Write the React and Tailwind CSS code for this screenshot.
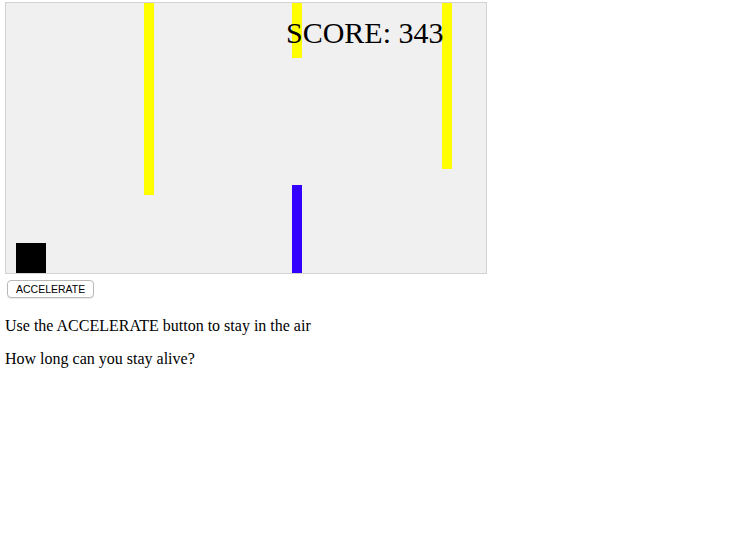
import React from 'react';

const obstacles = [
  { x: 138, y: 0, h: 192, color: 'bg-[#ffff00]' },
  { x: 286, y: 0, h: 55, color: 'bg-[#ffff00]' },
  { x: 286, y: 182, h: 88, color: 'bg-[#3300ff]' },
  { x: 436, y: 0, h: 166, color: 'bg-[#ffff00]' },
];

const App = () => {
  return (
    <div className="min-h-screen bg-white pl-[5px] pt-[2px] text-black" style={{ fontFamily: '"Liberation Serif", serif' }}>
      {/* Game canvas */}
      <div className="relative w-[482px] h-[272px] border border-[#d3d3d3] bg-[#f0f0f0] overflow-hidden">
        {obstacles.map((o, i) => (
          <div
            key={i}
            className={`absolute w-[10px] ${o.color}`}
            style={{ left: o.x, top: o.y, height: o.h }}
          />
        ))}
        <div className="absolute left-[10px] top-[240px] w-[30px] h-[30px] bg-black" />
        <span className="absolute left-[280px] top-[15px] text-[30px] leading-[30px] whitespace-nowrap">
          SCORE: 343
        </span>
      </div>

      <button
        className="mt-[6px] ml-[2px] h-[18px] px-[8px] rounded-[4px] border border-[#b8b8b8] bg-white text-[10.5px] leading-[16px] text-black shadow-[0_1px_1px_rgba(0,0,0,0.08)]"
        style={{ fontFamily: '"Liberation Sans", Arial, sans-serif' }}
      >
        ACCELERATE
      </button>

      <p className="mt-[17px] text-[16px] leading-[18px]">Use the ACCELERATE button to stay in the air</p>
      <p className="mt-[15px] text-[16px] leading-[18px]">How long can you stay alive?</p>
    </div>
  );
};

export default App;
